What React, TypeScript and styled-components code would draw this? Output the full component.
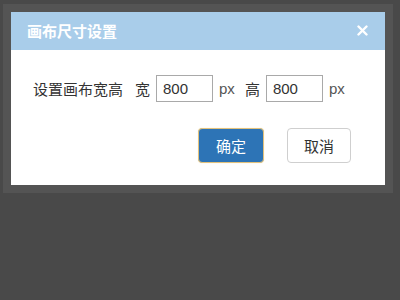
import React from 'react'
import styled, { createGlobalStyle } from 'styled-components'

const GlobalStyle = createGlobalStyle`
  html, body {
    margin: 0;
    padding: 0;
    background: #4a4a4a;
    height: 100%;
  }
  body {
    font-family: "Liberation Sans", "Noto Sans CJK SC", sans-serif;
  }
`

const Stage = styled.div`
  width: 400px;
  height: 300px;
  overflow: hidden;
  background: #494949;
  padding: 4px 0 0 3px;
  box-sizing: border-box;
`

const Frame = styled.div`
  width: 390px;
  padding: 8px;
  box-sizing: border-box;
  background: #545454;
`

const Dialog = styled.div`
  width: 374px;
  background: #fff;
  display: flex;
  flex-direction: column;
`

const Header = styled.div`
  height: 38px;
  background: #a9cdea;
  display: flex;
  align-items: center;
  justify-content: space-between;
  padding: 0 16px 2px 16px;
  box-sizing: border-box;
`

const Title = styled.h3`
  margin: 0;
  font-size: 15px;
  line-height: 1;
  font-weight: bold;
  color: #fff;
  font-family: "Noto Sans CJK SC", sans-serif;
`

const Close = styled.button`
  border: none;
  background: none;
  padding: 0;
  width: 14px;
  height: 14px;
  display: flex;
  align-items: center;
  justify-content: center;
  cursor: pointer;
`

const Body = styled.div`
  padding: 25px 34px 22px 22px;
  display: flex;
  flex-direction: column;
  gap: 26px;
`

const Row = styled.div`
  display: flex;
  align-items: center;
  color: #333;
  font-size: 15px;
`

const Label = styled.span<{ $gap: number }>`
  font-family: "Noto Sans CJK SC", sans-serif;
  margin-right: ${({ $gap }) => $gap}px;
`

const Unit = styled.span<{ $gap: number }>`
  margin: 0 ${({ $gap }) => $gap}px 0 6px;
  color: #555;
`

const SizeInput = styled.input`
  width: 57px;
  height: 27px;
  box-sizing: border-box;
  border: 1px solid #a9a9a9;
  padding: 0 6px;
  font-size: 15px;
  font-family: "Liberation Sans", sans-serif;
  color: #333;
  outline: none;
`

const Actions = styled.div`
  display: flex;
  justify-content: flex-end;
  gap: 23px;
`

const Button = styled.button<{ $primary?: boolean }>`
  height: 35px;
  width: ${({ $primary }) => ($primary ? 66 : 64)}px;
  border-radius: 4px;
  font-size: 15px;
  font-family: "Noto Sans CJK SC", sans-serif;
  cursor: pointer;
  background: ${({ $primary }) => ($primary ? '#2d74b6' : '#fff')};
  color: ${({ $primary }) => ($primary ? '#fff' : '#333')};
  border: 1px solid ${({ $primary }) => ($primary ? '#e2c17c' : '#cfcfcf')};
  box-shadow: ${({ $primary }) => ($primary ? '0 0 1px #f0d9a0' : 'none')};
`

export default function App() {
  return (
    <Stage>
      <GlobalStyle />
      <Frame>
        <Dialog>
          <Header>
            <Title>画布尺寸设置</Title>
            <Close aria-label="close">
              <svg width="11" height="11" viewBox="0 0 11 11">
                <path d="M1.5 1.5 L9.5 9.5 M9.5 1.5 L1.5 9.5" stroke="#fff" strokeWidth="2.4" strokeLinecap="round" />
              </svg>
            </Close>
          </Header>
          <Body>
            <Row>
              <Label $gap={12}>设置画布宽高</Label>
              <Label $gap={6}>宽</Label>
              <SizeInput defaultValue="800" />
              <Unit $gap={10}>px</Unit>
              <Label $gap={6}>高</Label>
              <SizeInput defaultValue="800" />
              <Unit $gap={0}>px</Unit>
            </Row>
            <Actions>
              <Button $primary>确定</Button>
              <Button>取消</Button>
            </Actions>
          </Body>
        </Dialog>
      </Frame>
    </Stage>
  )
}
